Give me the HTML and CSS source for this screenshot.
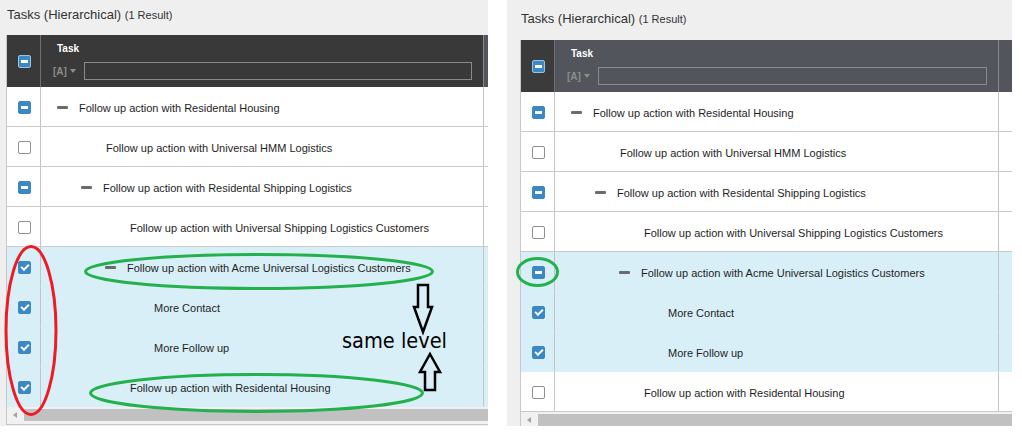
FILE: index.html
```html
<!DOCTYPE html>
<html>
<head>
  <meta charset="UTF-8">
  <title>Tasks (Hierarchical)</title>
  <link rel="stylesheet" href="styles.css">
</head>
<body>
  <div class="page">
    <section class="shot shot-before">
      <h2 class="grid-title">Tasks (Hierarchical) <small>(1 Result)</small></h2>
      <div class="grid">
        <div class="grid-head">
          <div class="cell-check"><span class="cb cb-partial"></span></div>
          <div class="cell-task">
            <div class="col-name">Task</div>
            <div class="col-filter">
              <span class="filter-type">[A]</span><span class="caret"></span>
              <input type="text" class="filter-input" autocomplete="off">
            </div>
          </div>
          <div class="cell-rest"></div>
        </div>
        <div class="grid-row">
          <div class="cell-check"><span class="cb cb-partial"></span></div>
          <div class="cell-task lvl-0"><span class="tree-toggle"></span>Follow up action with Residental Housing</div>
          <div class="cell-rest"></div>
        </div>
        <div class="grid-row">
          <div class="cell-check"><span class="cb"></span></div>
          <div class="cell-task lvl-1"><span class="tree-leaf"></span>Follow up action with Universal HMM Logistics</div>
          <div class="cell-rest"></div>
        </div>
        <div class="grid-row">
          <div class="cell-check"><span class="cb cb-partial"></span></div>
          <div class="cell-task lvl-1"><span class="tree-toggle"></span>Follow up action with Residental Shipping Logistics</div>
          <div class="cell-rest"></div>
        </div>
        <div class="grid-row">
          <div class="cell-check"><span class="cb"></span></div>
          <div class="cell-task lvl-2"><span class="tree-leaf"></span>Follow up action with Universal Shipping Logistics Customers</div>
          <div class="cell-rest"></div>
        </div>
        <div class="grid-row selected">
          <div class="cell-check"><span class="cb cb-checked"></span></div>
          <div class="cell-task lvl-2"><span class="tree-toggle"></span>Follow up action with Acme Universal Logistics Customers</div>
          <div class="cell-rest"></div>
        </div>
        <div class="grid-row selected">
          <div class="cell-check"><span class="cb cb-checked"></span></div>
          <div class="cell-task lvl-3"><span class="tree-leaf"></span>More Contact</div>
          <div class="cell-rest"></div>
        </div>
        <div class="grid-row selected">
          <div class="cell-check"><span class="cb cb-checked"></span></div>
          <div class="cell-task lvl-3"><span class="tree-leaf"></span>More Follow up</div>
          <div class="cell-rest"></div>
        </div>
        <div class="grid-row selected">
          <div class="cell-check"><span class="cb cb-checked"></span></div>
          <div class="cell-task lvl-2"><span class="tree-leaf"></span>Follow up action with Residental Housing</div>
          <div class="cell-rest"></div>
        </div>
        <div class="hscroll"><span class="hscroll-btn"></span><span class="hscroll-thumb"></span></div>
      </div>
    </section>

    <section class="shot shot-after">
      <h2 class="grid-title">Tasks (Hierarchical) <small>(1 Result)</small></h2>
      <div class="grid">
        <div class="grid-head">
          <div class="cell-check"><span class="cb cb-partial"></span></div>
          <div class="cell-task">
            <div class="col-name">Task</div>
            <div class="col-filter">
              <span class="filter-type">[A]</span><span class="caret"></span>
              <input type="text" class="filter-input" autocomplete="off">
            </div>
          </div>
          <div class="cell-rest"></div>
        </div>
        <div class="grid-row">
          <div class="cell-check"><span class="cb cb-partial"></span></div>
          <div class="cell-task lvl-0"><span class="tree-toggle"></span>Follow up action with Residental Housing</div>
          <div class="cell-rest"></div>
        </div>
        <div class="grid-row">
          <div class="cell-check"><span class="cb"></span></div>
          <div class="cell-task lvl-1"><span class="tree-leaf"></span>Follow up action with Universal HMM Logistics</div>
          <div class="cell-rest"></div>
        </div>
        <div class="grid-row">
          <div class="cell-check"><span class="cb cb-partial"></span></div>
          <div class="cell-task lvl-1"><span class="tree-toggle"></span>Follow up action with Residental Shipping Logistics</div>
          <div class="cell-rest"></div>
        </div>
        <div class="grid-row">
          <div class="cell-check"><span class="cb"></span></div>
          <div class="cell-task lvl-2"><span class="tree-leaf"></span>Follow up action with Universal Shipping Logistics Customers</div>
          <div class="cell-rest"></div>
        </div>
        <div class="grid-row selected">
          <div class="cell-check"><span class="cb cb-partial"></span></div>
          <div class="cell-task lvl-2"><span class="tree-toggle"></span>Follow up action with Acme Universal Logistics Customers</div>
          <div class="cell-rest"></div>
        </div>
        <div class="grid-row selected">
          <div class="cell-check"><span class="cb cb-checked"></span></div>
          <div class="cell-task lvl-3"><span class="tree-leaf"></span>More Contact</div>
          <div class="cell-rest"></div>
        </div>
        <div class="grid-row selected">
          <div class="cell-check"><span class="cb cb-checked"></span></div>
          <div class="cell-task lvl-3"><span class="tree-leaf"></span>More Follow up</div>
          <div class="cell-rest"></div>
        </div>
        <div class="grid-row">
          <div class="cell-check"><span class="cb"></span></div>
          <div class="cell-task lvl-2"><span class="tree-leaf"></span>Follow up action with Residental Housing</div>
          <div class="cell-rest"></div>
        </div>
        <div class="hscroll"><span class="hscroll-btn"></span><span class="hscroll-thumb"></span></div>
      </div>
    </section>

    <!-- hand-drawn markup on top of the screenshots -->
    <svg class="markup" width="1022" height="443" viewBox="0 0 1022 443">
      <ellipse cx="31" cy="330.5" rx="25" ry="84" fill="none" stroke="#ed1c24" stroke-width="3"/>
      <ellipse cx="259" cy="271.5" rx="173.5" ry="17" fill="none" stroke="#22b14c" stroke-width="3"/>
      <ellipse cx="256.5" cy="393" rx="166" ry="18.5" fill="none" stroke="#22b14c" stroke-width="3"/>
      <ellipse cx="537.5" cy="272" rx="20" ry="13.5" fill="none" stroke="#22b14c" stroke-width="3"/>
      <polygon points="418,285 428,285 428,307 432,307 423,332 414,307 418,307" fill="none" stroke="#000" stroke-width="2.5"/>
      <polygon points="430,354 440,372 435,372 435,390 425,390 425,372 420,372" fill="none" stroke="#000" stroke-width="2.5"/>
      <text x="342" y="348" class="markup-text" textLength="105" lengthAdjust="spacingAndGlyphs">same level</text>
    </svg>
  </div>
</body>
</html>
```

FILE: styles.css
```css
* {
  box-sizing: border-box;
  margin: 0;
  padding: 0;
}

body {
  background: #fff;
  font-family: "Liberation Sans", Arial, sans-serif;
  color: #222;
}

.page {
  position: relative;
  display: flex;
  gap: 19px;
  width: 1022px;
  height: 443px;
}

.shot {
  display: flex;
  flex-direction: column;
  height: 426px;
  background: #efefef;
}

.shot-before {
  width: 488px;
  padding-left: 6px;
}

.shot-after {
  width: 505px;
  padding-left: 13px;
}

.grid-title {
  height: 35px;
  padding: 7px 0 0 1px;
  font-size: 13px;
  line-height: 15px;
  font-weight: normal;
  color: #333;
}

.shot-after .grid-title {
  height: 40px;
  padding-top: 11px;
}

.grid-title small {
  font-size: 11px;
}

.grid {
  background: #fff;
  border-left: 1px solid #c8c8c8;
}

.shot-before .grid {
  border-bottom: 1px solid #c8c8c8;
}

.grid-head,
.grid-row {
  display: grid;
  grid-template-columns: 34px 443px 1fr;
}

.shot-after .grid-head,
.shot-after .grid-row {
  grid-template-columns: 34px 444px 1fr;
}

/* header */
.grid-head {
  height: 52px;
  background: #393939;
  color: #fff;
}

.grid-head .cell-check {
  display: flex;
  align-items: center;
  justify-content: center;
  padding-left: 2px;
  border-right: 1px solid #6f6f6f;
}

.grid-head .cell-task {
  padding: 8px 11px 0 16px;
  border-right: 1px solid #8a8a8a;
}

.grid-head .cell-rest {
  background: #52555c;
}

.shot-after .grid-head {
  background: #52555c;
}

.shot-after .grid-head .cell-check {
  background: #3b3b3b;
}

.col-name {
  font-size: 10px;
  line-height: 12px;
  font-weight: bold;
}

.col-filter {
  display: flex;
  align-items: center;
  height: 18px;
  margin: 7px 0 0 -4px;
}

.filter-type {
  font-size: 10px;
  font-weight: bold;
  color: #8d8d8d;
}

.caret {
  width: 0;
  height: 0;
  margin-left: 3px;
  border-left: 3px solid transparent;
  border-right: 3px solid transparent;
  border-top: 4px solid #8d8d8d;
}

.filter-input {
  flex: 1;
  height: 18px;
  margin-left: 8px;
  background: transparent;
  border: 1px solid #8a8a8a;
  outline: none;
}

/* rows */
.grid-row {
  height: 40px;
  font-size: 11px;
  color: #1e1e1e;
}

.grid-row > div {
  display: flex;
  align-items: center;
  padding-top: 2px;
  border-bottom: 1px solid #cacaca;
}

.grid-row .cell-check {
  justify-content: center;
  padding-left: 2px;
  border-right: 1px solid #c4c4c4;
}

.grid-row .cell-task {
  border-right: 1px solid #c4c4c4;
  white-space: nowrap;
}

.grid-row.selected > div {
  background: #d9eff7;
  border-bottom-color: #d9eff7;
}

.grid-row.selected .cell-check,
.grid-row.selected .cell-task {
  border-right-color: #c4c4c4;
}

.lvl-0 { padding-left: 16px; }
.lvl-1 { padding-left: 40px; }
.lvl-2 { padding-left: 64px; }
.lvl-3 { padding-left: 88px; }

.tree-toggle {
  flex: none;
  width: 11px;
  height: 3px;
  margin-right: 11px;
  background: #6b6b6b;
  border-radius: 1px;
}

.tree-leaf {
  flex: none;
  width: 25px;
}

/* checkboxes */
.cb {
  position: relative;
  flex: none;
  width: 13px;
  height: 13px;
  background: #fff;
  border: 1px solid #8f8f8f;
  border-radius: 2px;
}

.cb-partial,
.cb-checked {
  background: #3b88c4;
  border-color: #3b88c4;
}

.grid-head .cb {
  border-color: #9cc3e0;
}

.cb-partial::after {
  content: '';
  position: absolute;
  left: 2px;
  top: 4px;
  width: 7px;
  height: 3px;
  background: #fff;
}

.cb-checked::after {
  content: '';
  position: absolute;
  left: 2px;
  top: 2px;
  width: 6px;
  height: 3px;
  border-left: 2px solid #fff;
  border-bottom: 2px solid #fff;
  transform: rotate(-45deg);
}

/* horizontal scrollbar */
.hscroll {
  display: flex;
  height: 17px;
  padding: 2px 0 3px;
  background: #f1f1f1;
}

.shot-after .hscroll {
  height: 14px;
  padding: 2px 0 0;
}

.hscroll-btn {
  position: relative;
  width: 17px;
}

.hscroll-btn::before {
  content: '';
  position: absolute;
  left: 6px;
  top: 3px;
  border-top: 3px solid transparent;
  border-bottom: 3px solid transparent;
  border-right: 4px solid #a3a3a3;
}

.hscroll-thumb {
  flex: 1;
  background: #c1c1c1;
}

/* annotations */
.markup {
  position: absolute;
  top: 0;
  left: 0;
  pointer-events: none;
}

.markup-text {
  font-family: "DejaVu Sans", sans-serif;
  font-size: 22px;
  fill: #000;
}
```
